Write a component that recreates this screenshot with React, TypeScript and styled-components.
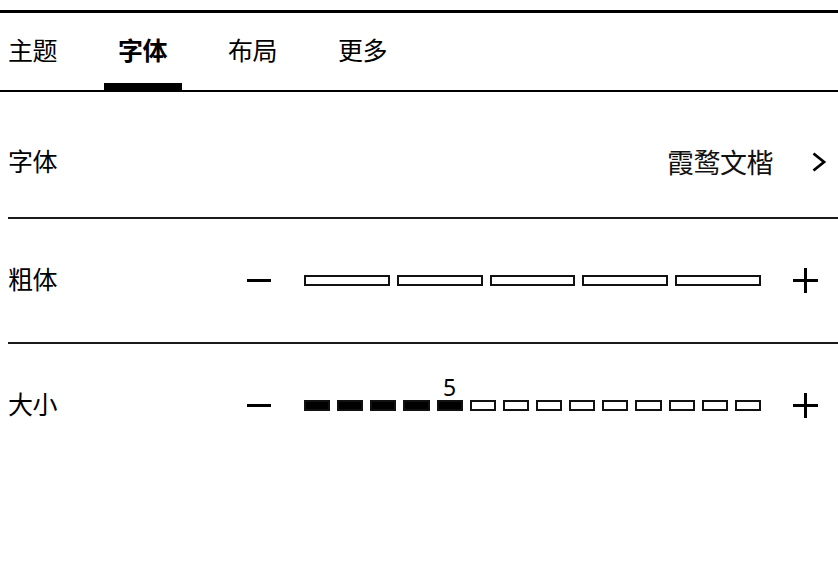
import React from "react";
import styled, { createGlobalStyle } from "styled-components";

const GlobalStyle = createGlobalStyle`
  html, body {
    margin: 0;
    padding: 0;
    background: #fff;
  }
  body {
    font-family: "Noto Sans CJK SC", "Noto Sans", sans-serif;
    color: #000;
  }
`;

const Page = styled.div`
  width: 838px;
  height: 568px;
  overflow: hidden;
  padding-top: 10px;
  box-sizing: border-box;
`;

const TopRule = styled.div`
  height: 3px;
  background: #000;
`;

const TabBar = styled.nav`
  display: flex;
  align-items: stretch;
  height: 77px;
  padding-left: 8px;
  gap: 61px;
  border-bottom: 2px solid #000;
`;

const Tab = styled.div<{ $active?: boolean }>`
  position: relative;
  display: flex;
  align-items: center;
  padding-bottom: 6px;
  font-size: 25px;
  font-weight: ${({ $active }) => ($active ? 700 : 400)};
  letter-spacing: -0.5px;

  &::after {
    content: "";
    display: ${({ $active }) => ($active ? "block" : "none")};
    position: absolute;
    left: -14px;
    right: -15px;
    bottom: -1px;
    height: 8px;
    background: #000;
  }
`;

const List = styled.div`
  display: flex;
  flex-direction: column;
`;

const Row = styled.div<{ $first?: boolean }>`
  display: flex;
  align-items: center;
  justify-content: space-between;
  height: ${({ $first }) => ($first ? "110px" : "123px")};
  margin-top: ${({ $first }) => ($first ? "15px" : "0")};
  margin-left: 8px;
  border-bottom: 2px solid #1a1a1a;
  box-sizing: content-box;

  &:last-child {
    border-bottom: none;
  }
`;

const Label = styled.span`
  margin-bottom: 5px;
  font-size: 25px;
  letter-spacing: -0.5px;
`;

const Value = styled.button`
  display: flex;
  align-items: center;
  gap: 38px;
  padding: 0 11px 0 0;
  border: none;
  background: none;
  font-family: inherit;
  font-size: 27px;
  color: #111;
  letter-spacing: -0.5px;
  line-height: 1.3;
`;

const Control = styled.div`
  display: flex;
  align-items: center;
  gap: 32px;
  padding-right: 20px;
`;

const StepButton = styled.button`
  display: flex;
  align-items: center;
  justify-content: center;
  width: 25px;
  height: 25px;
  padding: 0;
  border: none;
  background: none;
`;

const Track = styled.div`
  position: relative;
  display: flex;
  gap: 7px;
  width: 457px;
`;

const Segment = styled.div<{ $filled?: boolean }>`
  position: relative;
  flex: 1;
  height: 11px;
  box-sizing: border-box;
  border: 2px solid #111;
  background: ${({ $filled }) => ($filled ? "#000" : "#fff")};
`;

const StepLabel = styled.span`
  position: absolute;
  left: 50%;
  bottom: 100%;
  transform: translateX(-50%);
  margin-bottom: 1px;
  font-family: "Noto Sans", sans-serif;
  font-size: 23px;
  line-height: 1;
  padding-bottom: 2px;
`;

const Minus = () => (
  <svg width="25" height="25" viewBox="0 0 25 25">
    <rect x="0" y="11" width="24" height="3" fill="#000" />
  </svg>
);

const Plus = () => (
  <svg width="25" height="25" viewBox="0 0 25 25">
    <rect x="0" y="11" width="25" height="3" fill="#000" />
    <rect x="11" y="0" width="3" height="25" fill="#000" />
  </svg>
);

const Chevron = () => (
  <svg width="16" height="22" viewBox="0 0 16 22">
    <path d="M2.5 2.5 L13 11 L2.5 19.5" fill="none" stroke="#000" strokeWidth="2.8" />
  </svg>
);

const Stepper = ({ count, value }: { count: number; value: number }) => (
  <Control>
    <StepButton>
      <Minus />
    </StepButton>
    <Track>
      {Array.from({ length: count }, (_, i) => (
        <Segment key={i} $filled={i < value}>
          {value > 0 && i === value - 1 && <StepLabel>{value}</StepLabel>}
        </Segment>
      ))}
    </Track>
    <StepButton>
      <Plus />
    </StepButton>
  </Control>
);

const tabs = ["主题", "字体", "布局", "更多"];

export default function App() {
  return (
    <Page>
      <GlobalStyle />
      <TopRule />
      <TabBar>
        {tabs.map((t) => (
          <Tab key={t} $active={t === "字体"}>
            {t}
          </Tab>
        ))}
      </TabBar>
      <List>
        <Row $first>
          <Label>字体</Label>
          <Value>
            霞鹜文楷
            <Chevron />
          </Value>
        </Row>
        <Row>
          <Label>粗体</Label>
          <Stepper count={5} value={0} />
        </Row>
        <Row>
          <Label>大小</Label>
          <Stepper count={14} value={5} />
        </Row>
      </List>
    </Page>
  );
}
